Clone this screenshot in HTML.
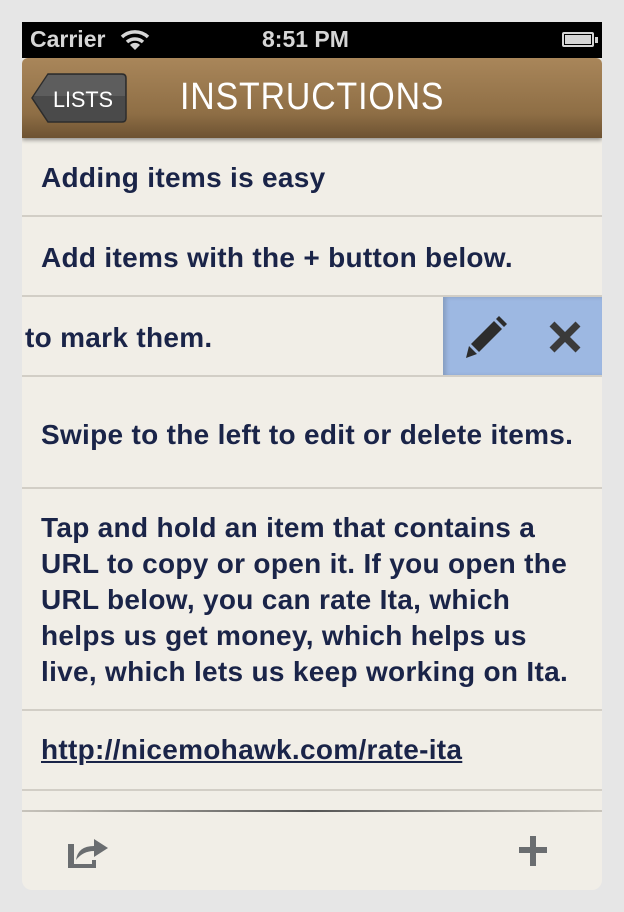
<!DOCTYPE html>
<html><head><style>
*{margin:0;padding:0;box-sizing:border-box}
body{width:624px;height:912px;background:#e6e6e6;position:relative;overflow:hidden;font-family:"Liberation Sans",sans-serif}
#phone{position:absolute;left:22px;top:22px;width:580px;height:868px;background:#f1eee7;border-radius:0 0 10px 10px;overflow:hidden}
#status{position:absolute;left:0;top:0;width:580px;height:36px;background:#000;color:#d6d6d6;font-size:23px;font-weight:bold}
#nav{position:absolute;left:0;top:36px;width:580px;height:80px;background:linear-gradient(#a9865a,#8e6e45 70%,#6d5232);border-radius:6px 6px 0 0;box-shadow:0 2px 4px rgba(0,0,0,.4)}
.t{position:absolute;left:19px;color:#1a2448;font-weight:bold;font-size:28px;letter-spacing:0.3px;line-height:36px;white-space:nowrap}
.sep{position:absolute;left:0;width:580px;height:2px;background:#d2cec6}
</style></head><body>
<div id="phone">
<div id="status">
<span style="position:absolute;left:8px;top:4px">Carrier</span>
<svg style="position:absolute;left:98px;top:7px" width="30" height="22" viewBox="0 0 30 22"><path d="M2 8 A19 19 0 0 1 28 8" stroke="#d6d6d6" stroke-width="3.5" fill="none"/><path d="M7 13 A12 12 0 0 1 23 13" stroke="#d6d6d6" stroke-width="3.5" fill="none"/><path d="M15 21 L10 16 A7 7 0 0 1 20 16Z" fill="#d6d6d6"/></svg>
<span style="position:absolute;left:240px;top:4px">8:51 PM</span>
<div style="position:absolute;left:540px;top:10px;width:32px;height:15px;border:2px solid #d6d6d6;border-radius:2px;padding:1px"><div style="width:100%;height:100%;background:#d6d6d6"></div></div>
<div style="position:absolute;left:573px;top:15px;width:3px;height:6px;background:#d6d6d6"></div>
</div>
<div id="nav">
<svg style="position:absolute;left:8px;top:14px" width="98" height="52" viewBox="0 0 98 52"><path d="M18 2 H92 Q96 2 96 6 V46 Q96 50 92 50 H18 L2 26 Z" fill="#4a4a4a" stroke="#2c2c2c" stroke-width="1.5"/><path d="M18 3 H92 Q95 3 95 6 V24 H4 Z" fill="#6a6a6a" opacity=".6"/><text x="53" y="35" text-anchor="middle" fill="#fff" font-family="Liberation Sans Narrow,Liberation Sans,sans-serif" font-size="22" textLength="60" lengthAdjust="spacingAndGlyphs">LISTS</text></svg>
<div style="position:absolute;left:158px;top:18px;color:#fff;font-size:38px;letter-spacing:1px;font-family:'Liberation Sans',sans-serif;transform:scaleX(.89);transform-origin:left">INSTRUCTIONS</div>
</div>
<div class="t" style="top:138px">Adding items is easy</div>
<div class="sep" style="top:193px"></div>
<div class="t" style="top:218px">Add items with the + button below.</div>
<div class="sep" style="top:273px"></div>
<div class="t" style="top:298px;left:3px">to mark them.</div>
<div style="position:absolute;left:421px;top:275px;width:159px;height:79px;background:#9db8e2;box-shadow:inset 3px 0 4px rgba(0,0,0,.15)">
<svg style="position:absolute;left:22px;top:16px" width="46" height="46" viewBox="0 0 46 46"><path d="M34 3 L42 11 L39 14 L31 6Z" fill="#2c2c2c"/><path d="M29 8 L37 16 L14 39 L6 31Z" fill="#2c2c2c"/><path d="M4 33 L12 41 L1 45Z" fill="#2c2c2c"/></svg>
<svg style="position:absolute;left:104px;top:22px" width="36" height="36" viewBox="0 0 36 36"><path d="M5 5 L31 31 M31 5 L5 31" stroke="#3a3a3a" stroke-width="7"/></svg>
</div>
<div class="sep" style="top:353px"></div>
<div class="t" style="top:395px">Swipe to the left to edit or delete items.</div>
<div class="sep" style="top:465px"></div>
<div class="t" style="top:488px">Tap and hold an item that contains a<br>URL to copy or open it. If you open the<br>URL below, you can rate Ita, which<br>helps us get money, which helps us<br>live, which lets us keep working on Ita.</div>
<div class="sep" style="top:687px"></div>
<div class="t" style="top:710px;text-decoration:underline">http://nicemohawk.com/rate-ita</div>
<div class="sep" style="top:767px"></div>
<div style="position:absolute;left:0;top:788px;width:580px;height:2px;background:linear-gradient(90deg,#c8c4bc,#555 50%,#c8c4bc)"></div>
<svg style="position:absolute;left:44px;top:812px" width="44" height="36" viewBox="0 0 44 36"><path d="M2 10 H8 V30 H26 V26 H30 V34 H2Z" fill="#6a6d70"/><path d="M10 26 Q12 12 28 12 V5 L42 14 L28 23 V17 Q17 17 10 26Z" fill="#6a6d70"/></svg>
<svg style="position:absolute;left:495px;top:812px" width="34" height="34" viewBox="0 0 34 34"><path d="M13 2 H19 V13 H30 V19 H19 V32 H13 V19 H2 V13 H13Z" fill="#6a6d70"/></svg>
</div>
</body></html>
